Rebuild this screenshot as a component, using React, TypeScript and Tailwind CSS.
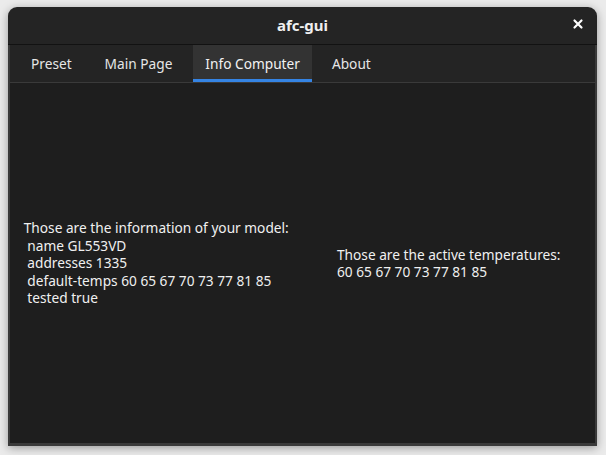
export default function App() {
  return (
    <div className="w-[606px] h-[455px] bg-[#ebebeb] pt-[7px] px-[8px] font-['Noto_Sans',sans-serif]">
      <div className="w-[589px] h-[439px] flex flex-col rounded-t-[9px] bg-[#242424] shadow-[0_2px_10px_rgba(0,0,0,0.35)] overflow-hidden">
        {/* Header bar */}
        <div className="relative h-[38px] flex items-center justify-center border-b border-[#121212]">
          <span className="text-[15px] font-bold text-[#f0f0f0]">afc-gui</span>
          <button className="absolute right-[13px] top-[11px] text-white" aria-label="Close">
            <svg width="12" height="12" viewBox="0 0 12 12" fill="none" stroke="currentColor" strokeWidth="2.2" strokeLinecap="round">
              <path d="M2.5 2.5l7 7M9.5 2.5l-7 7" />
            </svg>
          </button>
        </div>

        {/* Body */}
        <div className="flex-1 flex flex-col bg-[#1e1e1e] border-x-2 border-b-[3px] border-[#3a3a3a]">
          {/* Tabs */}
          <div className="h-[38px] flex bg-[#242424] border-b border-[#3a3a3a] pl-[4px] text-[13.7px]">
            <div className="px-[17px] pt-[2px] flex items-center text-[#e6e6e6]">Preset</div>
            <div className="pl-[16px] pr-[21px] pt-[2px] flex items-center text-[#e6e6e6]">Main Page</div>
            <div className="relative px-[12px] pt-[2px] flex items-center bg-[#333333] text-[#f2f2f2]">
              Info Computer
              <span className="absolute left-0 right-0 bottom-0 h-[3px] bg-[#3584e4]" />
            </div>
            <div className="px-[20px] pt-[2px] flex items-center text-[#e6e6e6]">About</div>
          </div>

          {/* Content */}
          <div className="flex-1 grid grid-cols-2 items-center text-[13.7px] leading-[17.5px] text-[#f0f0f0]">
            <div className="flex justify-center">
              <div className="whitespace-pre">
                {'Those are the information of your model:\n name GL553VD\n addresses 1335\n default-temps 60 65 67 70 73 77 81 85\n tested true'}
              </div>
            </div>
            <div className="flex justify-center">
              <div className="whitespace-pre">
                {'Those are the active temperatures:\n60 65 67 70 73 77 81 85'}
              </div>
            </div>
          </div>
        </div>
      </div>
    </div>
  )
}
